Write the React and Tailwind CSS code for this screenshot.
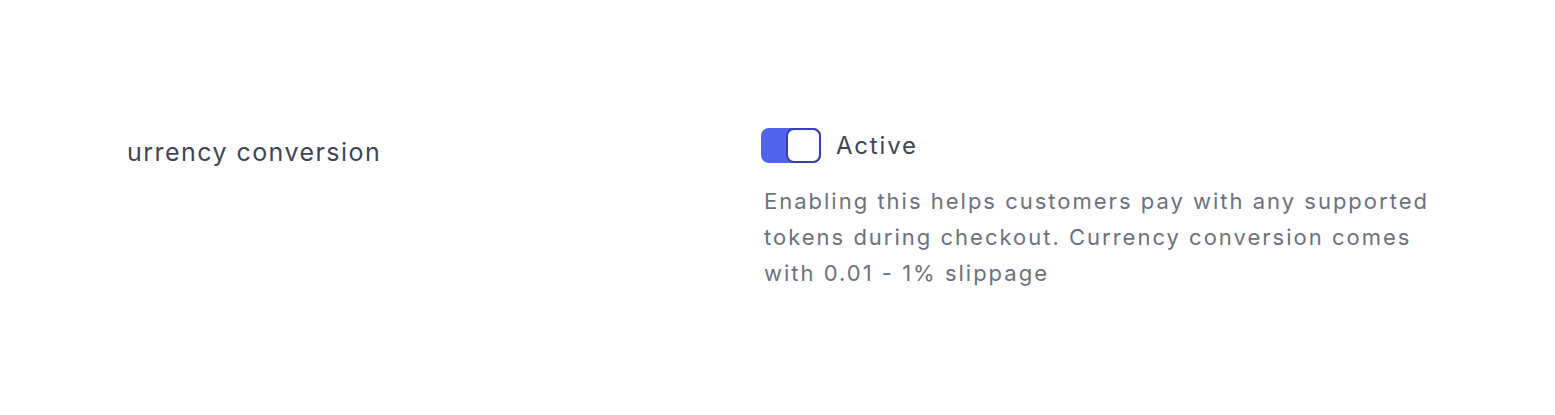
import React, { useState } from 'react';

export default function App() {
    const [active, setActive] = useState(true);

    return (
        <div className="w-[1555px] h-[415px] bg-white" style={{ fontFamily: 'Inter, "Noto Sans", sans-serif' }}>
            <div className="flex pt-[128px] pl-[127px]">
                {/* Label */}
                <div className="w-[634px] pt-[8px]">
                    <span className="text-[25px] leading-[32px] tracking-[1.45px] text-[#3f4756]">urrency conversion</span>
                </div>

                {/* Setting */}
                <div className="w-[680px]">
                    <div className="flex items-center gap-[15px]">
                        <button
                            onClick={() => setActive(!active)}
                            className="relative w-[60px] h-[35px] rounded-[8px] bg-[#4f63eb] cursor-pointer"
                        >
                            <span className="absolute right-0 top-0 w-[35px] h-[35px] rounded-[8px] bg-white border-2 border-[#3442b3]" />
                        </button>
                        <span className="text-[24px] leading-[35px] tracking-[1.8px] text-[#3f4756]">Active</span>
                    </div>
                    <p className="mt-[20px] pl-[3px] text-[22px] leading-[36px] tracking-[2px] text-[#6b7280]">
                        Enabling this helps customers pay with any supported tokens during checkout. Currency conversion comes with 0.01 - 1% slippage
                    </p>
                </div>
            </div>
        </div>
    );
}
